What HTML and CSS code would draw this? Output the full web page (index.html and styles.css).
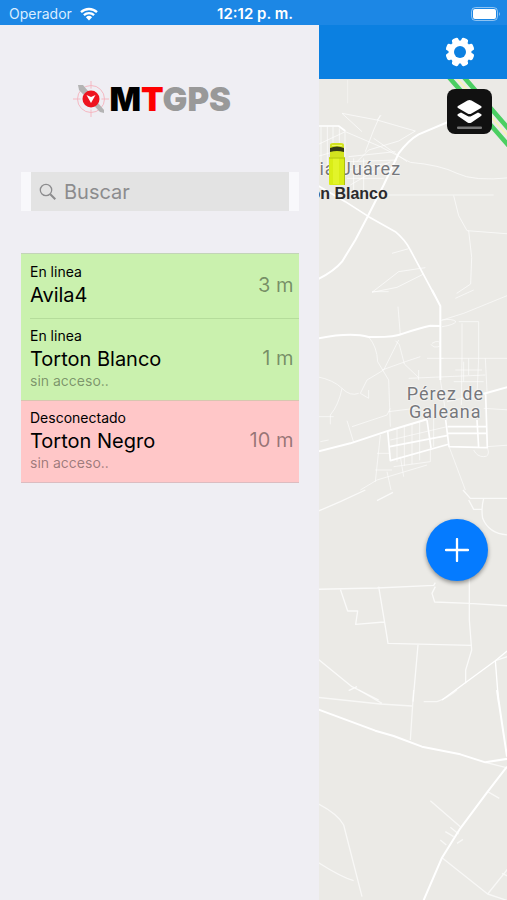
FILE: index.html
```html
<!DOCTYPE html>
<html lang="es">
<head>
<meta charset="utf-8">
<meta name="viewport" content="width=device-width, initial-scale=1">
<title>MTGPS</title>
<link rel="stylesheet" href="styles.css">
</head>
<body>
<div class="app">
  <header class="status">
    <div class="carrier">
      <span>Operador</span>
      <svg class="wifi" viewBox="0 0 18 14" aria-hidden="true">
        <path d="M1 5.2a11.6 11.6 0 0 1 16 0M3.9 8.1a7.4 7.4 0 0 1 10.2 0" fill="none" stroke="#fff" stroke-width="2.3"/>
        <path d="M9 13.6 5.9 10.3a4.5 4.5 0 0 1 6.2 0z" fill="#fff"/>
      </svg>
    </div>
    <time class="clock">12:12 p. m.</time>
    <svg class="battery" viewBox="0 0 30 14" aria-hidden="true">
      <rect x=".5" y=".5" width="26" height="13" rx="4" fill="none" stroke="#fff" stroke-opacity=".5"/>
      <rect x="2" y="2" width="23" height="10" rx="2" fill="#fff"/>
      <path d="M28 5v4q2-2 0-4" fill="#fff" fill-opacity=".5"/>
    </svg>
  </header>

  <aside class="panel">
    <div class="brand">
      <svg class="mark" viewBox="0 0 36 36" aria-hidden="true">
        <circle cx="18" cy="18" r="13.500" fill="none" stroke="#f5b8c2"/>
        <path d="M18 0v36M0 18h36" stroke="#f5b8c2"/>
        <circle cx="18" cy="18" r="10.500" fill="#efeef3"/>
        <path d="M5 4h5L31 29v3l-4-1L6 9z" fill="#b4b4b4"/>
        <circle cx="18" cy="18" r="8.500" fill="#ee1420"/>
        <path d="m13.500 14 4.500 2 4.500-2-4.500 8z" fill="#fff"/>
      </svg>
      <h1 class="name">M<span class="red">T</span><span class="gray">GPS</span></h1>
    </div>

    <div class="search">
      <label class="field">
        <svg class="glass" viewBox="0 0 18 18" aria-hidden="true">
          <circle cx="7" cy="7" r="5.700" fill="none" stroke="#8c8c8e" stroke-width="1.300"/>
          <path d="m11.300 11.300 5 5" stroke="#8c8c8e" stroke-width="2"/>
        </svg>
        <input type="search" placeholder="Buscar" aria-label="Buscar">
      </label>
    </div>

    <ul class="units">
      <li class="unit online">
        <div class="info"><span class="state">En linea</span><span class="title">Avila4</span></div>
        <span class="ago">3 m</span>
      </li>
      <li class="unit online">
        <div class="info"><span class="state">En linea</span><span class="title">Torton Blanco</span><span class="note">sin acceso..</span></div>
        <span class="ago">1 m</span>
      </li>
      <li class="unit offline">
        <div class="info"><span class="state">Desconectado</span><span class="title">Torton Negro</span><span class="note">sin acceso..</span></div>
        <span class="ago">10 m</span>
      </li>
    </ul>
  </aside>

  <main class="content">
    <div class="toolbar">
      <button class="gear" type="button" aria-label="Ajustes">
        <svg viewBox="-15 -15 30 30" aria-hidden="true">
          <g fill="#fff">
            <circle r="11.500"/>
            <rect x="-3.500" y="-14.500" width="7" height="29" rx="2.200" transform="rotate(22.500)"/>
            <rect x="-3.500" y="-14.500" width="7" height="29" rx="2.200" transform="rotate(67.500)"/>
            <rect x="-3.500" y="-14.500" width="7" height="29" rx="2.200" transform="rotate(112.500)"/>
            <rect x="-3.500" y="-14.500" width="7" height="29" rx="2.200" transform="rotate(157.500)"/>
          </g>
          <circle r="6" fill="#0b80e1"/>
        </svg>
      </button>
    </div>
    <div class="map">
      <svg class="tiles" viewBox="0 0 564 2463" preserveAspectRatio="xMinYMin slice" aria-hidden="true">
        <g fill="none" stroke="#fff" stroke-linejoin="round">
          <g transform="translate(-6 -12)">
            <path d="M390 0 590 229M430 -6 590 179" stroke="#4bcf62" stroke-width="14"/>
            <path d="M411 0 590 203" stroke="#f6f3b8" stroke-width="6"/>
            <path d="M0 614Q50 590 75 560L115 495 150 428 200 330 245 235Q275 195 305 178L400 138" stroke-width="6"/>
            <path d="M0 330 85 380 155 425 235 470Q265 495 280 525L353 661M0 153h65l20 15" stroke-width="5"/>
            <g stroke-opacity=".65" stroke-width="3">
              <path d="M75 115 180 135 295 168M75 115l60 55M190 120 170 165 145 230M180 135l12-14M85 170 190 215 280 262Q370 270 420 295T580 308M120 260 155 225 245 198 295 168M0 210 85 170M12 155v130M31 155v120M48 155v100M67 160v100M84 170v75M0 245l85-25M95 245l140-15M90 260l150-5M90 285l120-20M90 310h110M100 330l120-70M110 250v120M140 250v100M90 345l90 15H530M410 362l15 60 25 45 130 10M455 467l9 80-3 80-42 28M165 652l80-62 80-12M165 652l75-15 80-40M225 535l50-14M170 190l100 70"/>
              <path d="M92 15v70" stroke-opacity=".4"/>
            </g>
          </g>
          <g transform="translate(-6 633)">
            <path d="M345 0 370 48V270M0 146Q100 126 155 141 230 143 260 130 310 113 340 107L370 108M0 485 100 460 215 422 330 388M500 311 580 289" stroke-width="6"/>
            <path d="M212 422 220 512 397 462M218 470 393 436M330 390l12 84M386 390l10 80 115 3-5-160M392 410h116M392 430h118M480 390l5 82" stroke-width="5"/>
            <g stroke-opacity=".6" stroke-width="3">
              <path d="M370 92 440 70 580 13M415 25 470 0M345 160q25-15 25 8-20 8-28-5M375 110q35-5 42-15-10-10-42-5M243 50l7 85M155 141Q180 170 182 215L215 270 220 410M245 150 200 240 150 270 130 310 155 325 155 300M235 152l12 12 15 58 42 40M195 240l70-25 45-15M0 260q50 10 75 35t50 15M75 295q-10 50-35 80v28M5 380h45M105 410l105-35 10-20M90 392l20 65M10 455l25-5M275 265l230-10M305 240v30M370 205H570M435 100v95l-2 150M485 95v110l-5 110M505 205l5 100M425 95h60M415 240h80M410 275h90M330 205h50M440 215v60M455 205v50M215 365l80-10M500 355l80 5M240 415v100M262 408v120M285 402v120M308 396v115M350 385v85M220 450l170-40M230 530l110-15V470M190 435l-15 140M250 500l10 60M130 600l50-30 150-45M210 545l12 55M397 472 445 600M510 470l70-5M470 480q10 20 30 20t12-25M180 490h40M175 540h50"/>
              <path d="M165 5l50 0M0 290h4M370 270l20 120M390 335l110-24"/>
            </g>
          </g>
          <g transform="translate(-6 1233)">
            <path d="M580 475 535 512 545 640M535 512 445 578 375 630" stroke-width="4"/>
            <g stroke-opacity=".75" stroke-width="4">
              <path d="M0 65 70 35 145 0M180 32l48-25M438 0l22 25h120M455 30l15 28h25M500 25q-8 30-3 60 20 50 83 50M0 298l180-4 170-8 5-8M185 290l20 120 8 50 252 6M70 298l22 65h30l-6 40 85-7M355 290l-10 20 8 26 104 4 123 8M457 250v140l7 90-18 60v40M303 465l-15 170M0 505 105 590 185 630M535 512l45-15M120 590l-25 12"/>
            </g>
          </g>
          <g transform="translate(-6 1833)">
            <path d="M0 57 175 122 230 138 315 170 430 193 505 217 580 205M570 230 512 305 430 415 375 503 318 635M540 0 570 200" stroke-width="6"/>
            <g stroke-opacity=".65" stroke-width="4">
              <path d="M0 22 190 42l95 6M125 0l70 40M290 0 280 150M320 35h40q30-10 60-35M505 217l60 15M512 305l35 20M340 332l90 78M370 450l18 15M385 425l25 15M400 412l25 20M420 460l18-12M375 503 512 612l60-75M512 612l60 20M555 550l20 10M0 340Q60 370 80 405L135 620M0 515Q70 560 110 572"/>
            </g>
          </g>
        </g>
      </svg>
      <span class="place juarez">ia Juárez</span>
      <span class="place galeana">Pérez de<br>Galeana</span>
      <svg class="truck" viewBox="0 0 18 44" aria-hidden="true">
        <path d="M2 3q0-2 3-2h8q3 0 3 2v13H2z" fill="#d2e31f"/>
        <path d="M2 6q7-3 14 0v4q-7-2-14 0z" fill="#343a18"/>
        <path d="M4 3.500h10" stroke="#eef76b"/>
        <rect x="1" y="15" width="16" height="28" rx="1" fill="#d9ed16"/>
        <rect x="5" y="16" width="6" height="26" fill="#e2f42a"/>
        <path d="M1 16h16M16.500 16v27" stroke="#aebf14"/>
      </svg>
      <span class="pin">on Blanco</span>
      <button class="layers" type="button" aria-label="Capas">
        <svg viewBox="0 0 45 45" aria-hidden="true">
          <path d="M22.500 11 Q23.500 11 24.500 11.500L34 17q1.500 1 0 2L24.500 24.500q-2 1-4 0L11 19q-1.500-1 0-2l9.500-5.500q1-.5 2-.5z" fill="#fff"/>
          <path d="m11 25 3-1.500 6.500 3.500q2 1 4 0l6.500-3.500 3 1.500q1.500 1 0 2L24.500 33.500q-2 1-4 0L11 27q-1.500-1 0-2z" fill="#fff"/>
          <rect x="10" y="37.500" width="25" height="2.500" rx="1" fill="#777"/>
        </svg>
      </button>
      <button class="add" type="button" aria-label="Agregar">
        <svg viewBox="0 0 24 24" aria-hidden="true"><path d="M12 1v22M1 12h22" stroke="#fff" stroke-width="2.300" stroke-linecap="round"/></svg>
      </button>
    </div>
  </main>
</div>
</body>
</html>
```

FILE: styles.css
```css
* { box-sizing: border-box; }

body {
  margin: 0;
  font-family: Inter, "Liberation Sans", sans-serif;
  color: #000;
}

svg { display: block; }

button {
  display: grid;
  place-items: center;
  padding: 0;
  border: 0;
}

.app {
  display: grid;
  grid-template-rows: 25px 1fr;
  grid-template-columns: minmax(0, 63fr) minmax(0, 37fr);
  min-height: 100vh;
  background: #efeef3;
}

.status {
  grid-column: 1 / -1;
  display: grid;
  grid-template-columns: 1fr auto 1fr;
  align-items: center;
  padding: 2px 6px 0 9px;
  background: #1c87e5;
  color: #fff;
  font-size: 14px;
  line-height: 20px;
}

.carrier { display: flex; align-items: center; gap: 8px; color: #d9edff; }
.wifi { width: 18px; height: 14px; }
.clock { font-size: 15px; font-weight: 600; }
.battery { width: 30px; height: 14px; justify-self: end; }

.panel { padding: 54px 20px 0 21px; }

.brand {
  display: flex;
  align-items: center;
  justify-content: center;
  height: 40px;
  padding-right: 16px;
}
.mark { width: 36px; height: 36px; }
.name {
  margin: 0;
  font-size: 33px;
  line-height: 40px;
  font-weight: 900;
}
.red { color: #fe0000; }
.gray { color: #999; }

.search {
  margin-top: 53px;
  padding: 0 10px;
  background: #f8f8fb;
}
.field {
  display: flex;
  align-items: center;
  gap: 7px;
  height: 39px;
  padding-left: 8px;
  background: #e3e3e3;
}
.glass { width: 18px; height: 18px; flex: none; }
.field input {
  flex: 1;
  min-width: 0;
  padding: 0;
  border: 0;
  outline: 0;
  background: none;
  font: 20px/24px Inter, sans-serif;
  color: #000;
}
.field input::placeholder { color: #8c8c8e; opacity: 1; }

.units {
  margin: 42px 0 0;
  padding: 0;
  list-style: none;
  border-top: 1px solid #c3d4b8;
  border-bottom: 1px solid #dcbcc0;
}
.unit {
  display: flex;
  align-items: center;
  justify-content: space-between;
  padding: 8px 6px 10px 9px;
}
.online { background: #caf1ae; }
.offline { background: #ffc7c8; box-shadow: inset 0 1px #d8c6b0; }
.online + .online {
  background: linear-gradient(#b5dc9b, #b5dc9b) 9px 0 / 100% 1px no-repeat #caf1ae;
}
.info { display: flex; flex-direction: column; }
.state { font-size: 14px; line-height: 20px; }
.title { font-size: 20px; line-height: 26px; }
.note { font-size: 14px; line-height: 18px; color: rgba(0, 0, 0, .4); }
.ago { font-size: 20px; line-height: 26px; color: rgba(0, 0, 0, .42); }

.content { display: flex; flex-direction: column; min-width: 0; }
.toolbar {
  display: flex;
  justify-content: flex-end;
  height: 54px;
  padding: 0 32px;
  background: #0b80e1;
}
.gear { background: none; }
.gear svg { width: 30px; height: 30px; }

.map {
  position: relative;
  flex: 1;
  overflow: hidden;
  background: #ebeae6;
}
.tiles { position: absolute; inset: 0; width: 100%; height: 100%; }

.place {
  position: absolute;
  font: 18px/18px Roboto, sans-serif;
  letter-spacing: 1px;
  text-align: center;
  white-space: nowrap;
  color: #76777b;
  text-shadow: 0 0 2px #fff, 0 0 2px #fff;
}
.juarez { top: 81px; left: 0; }
.galeana { top: 306px; right: 23px; }

.truck { position: absolute; top: 63px; left: 9px; width: 18px; height: 44px; }
.pin {
  position: absolute;
  top: 105px;
  left: -9px;
  font: bold 16px/20px "Liberation Sans", sans-serif;
  color: #2b2b2d;
  white-space: nowrap;
}
.layers {
  position: absolute;
  top: 10px;
  right: 15px;
  width: 45px;
  height: 45px;
  border-radius: 8px;
  background: #111;
}
.layers svg { width: 45px; height: 45px; }
.add {
  position: absolute;
  top: 440px;
  right: 19px;
  width: 62px;
  height: 62px;
  border-radius: 50%;
  background: #057bff;
  box-shadow: 0 2px 4px rgba(0, 0, 0, .4);
}
.add svg { width: 24px; height: 24px; }
```
